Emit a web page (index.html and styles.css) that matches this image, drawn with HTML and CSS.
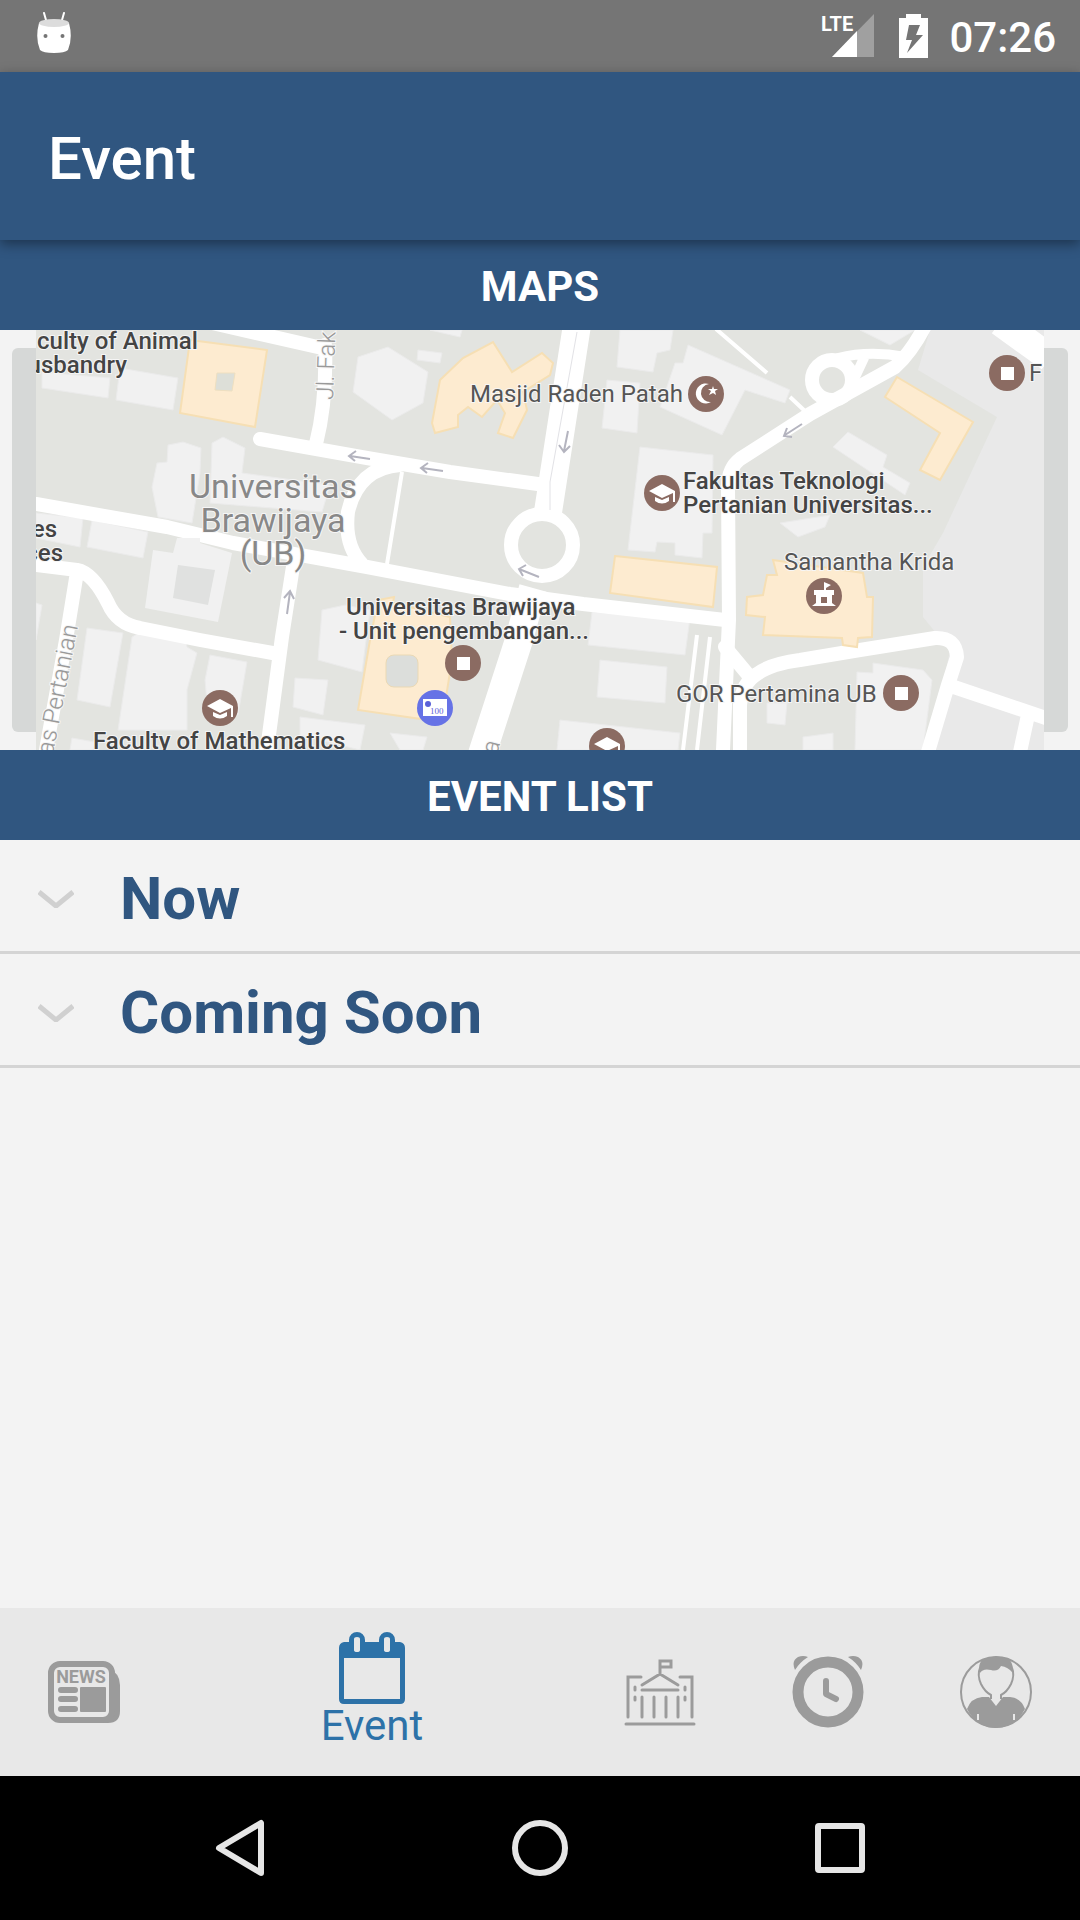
FILE: index.html
```html
<!DOCTYPE html>
<html lang="en">
<head>
<meta charset="utf-8">
<meta name="viewport" content="width=device-width, initial-scale=1">
<title>Event</title>
<link rel="stylesheet" href="styles.css">
</head>
<body>
<div class="screen">
  <div class="status-bar">
    <svg class="debug-icon" viewBox="0 0 34 42" width="34" height="42" aria-hidden="true">
      <path d="M7 1 9 8M27 1 25 8" stroke="#fff" stroke-width="2" stroke-linecap="round"/>
      <path d="M2 11Q17 15 32 11Q36 26 31 38Q28 41 17 41T3 38Q-2 26 2 11Z" fill="#fff"/>
      <ellipse cx="17" cy="11" rx="15" ry="4" fill="#dcdcdc"/>
      <circle cx="8.500" cy="24" r="2" fill="#757575"/><circle cx="25.500" cy="24" r="2" fill="#757575"/>
    </svg>
    <div class="status-icons">
      <svg viewBox="0 0 54 44" width="54" height="44" aria-hidden="true">
        <path d="M53 0V43H11Z" fill="#a0a0a0"/>
        <path d="M36 17V43H11Z" fill="#fff"/>
        <text class="lte" x="0" y="17">LTE</text>
      </svg>
      <svg class="battery" viewBox="0 0 29 44" width="29" height="44" aria-hidden="true">
        <path fill="#fff" fill-rule="evenodd" d="M7 0H22V4H29V44H0V4H7ZM10 11 7 26H13L8 39 24 21H17L21 11Z"/>
      </svg>
      <time class="clock">07:26</time>
    </div>
  </div>

  <header class="app-bar"><h1>Event</h1></header>

  <main class="content">
    <h2 class="section-title">Maps</h2>
    <button class="map-button" type="button" aria-label="Open campus map">
      <svg class="map" viewBox="36 330 1008 420" aria-hidden="true">
        <rect x="36" y="330" width="1008" height="420" fill="#e3e4e0"/>
        <path fill="#e9e9e9" d="M930 330 918 370 997 417 943 533 923 567V617L950 650 930 750H1044V330Z"/>
        <g class="building">
          <path d="M42 372 110 378 108 398 42 388ZM120 368 178 378 173 410 116 400Z"/>
          <path d="M168 445 183 442 201 448 200 473 192 523 158 517 152 487 157 463 167 462Z"/>
          <path d="M212 443 223 437 245 448 242 473 330 485 322 512 210 503Z"/>
          <path d="M36 513 83 518 80 547 36 538ZM92 520 148 532 143 558 87 547Z"/>
          <path d="M87 628 123 633 110 707 77 700ZM132 637 147 628 185 635 187 647 197 653 187 690V730H118Z"/>
          <path d="M210 655 247 662 238 715H208L205 680ZM36 603 42 605 36 640ZM72 738 95 742 93 750H70Z"/>
          <path d="M295 678 328 680 323 715 293 707ZM300 717 365 725 360 750 300 735ZM322 610 345 605 370 610 362 672 318 660Z"/>
          <path d="M388 347 428 372 423 403 392 420 353 392 358 357ZM418 350 442 353 440 363 417 360ZM430 330H462L460 337Z"/>
          <path d="M620 330H673L670 350 657 353 653 372 617 367ZM688 345 790 390 785 403 745 390 722 435 660 407 675 363 683 363Z"/>
          <path d="M607 380 640 383 637 433 602 428ZM640 447 713 455 712 533H703L702 558 675 555V543L657 542 655 552 628 550Z"/>
          <path d="M592 612 690 618 685 655 588 645ZM600 660 667 667 665 703 597 697ZM560 720 680 733 678 750H557Z"/>
          <path d="M390 733 427 737 423 750H400ZM848 432 887 455 883 467 910 483 905 495 833 447ZM780 523 830 515 825 527 798 537Z"/>
          <path d="M857 672 873 673V663L923 670 932 680 923 750H855ZM767 703H787L785 725 767 723ZM803 737 833 733V750H803ZM860 330H915L890 345Z"/>
        </g>
        <g class="road">
          <path d="M208 322 322 348M325 345Q327 400 316 444M260 439 367 458 450 472 545 485"/>
          <path d="M400 465Q358 468 348 512Q344 545 362 564M36 504 167 527 233 543 367 567 510 594 583 604 725 620"/>
          <path d="M36 565 77 570Q93 573 108 603Q117 624 140 628L200 640 278 654M77 572 66 640 46 750"/>
          <path d="M294 560 282 637 267 750M927 322Q912 352 895 367L810 414 740 459Q728 468 728 487L729 620 723 750"/>
          <path d="M740 752V705Q742 683 757 674Q770 664 800 660L860 650 935 638Q956 637 957 657L948 685 928 752M725 647 750 677M948 685 1046 718M1028 715 1020 752"/>
          <circle cx="832" cy="380" r="20"/>
          <circle class="ring" cx="542" cy="545" r="31"/>
          <path class="wide" d="M577 325 563 415 548 512M533 588 518 643 482 754M1000 322 1050 358"/>
          <path class="medium" d="M838 358Q870 350 905 357M864 358 850 388"/>
          <path class="thin" d="M402 472 387 564M716 329 767 373M790 397 807 413M697 635 683 750M710 637 697 750"/>
        </g>
        <path fill="#f1f1f1" d="M177 538H200V543L232 553 218 622 145 608 153 550 173 553Z"/>
        <path fill="#e0e1e0" d="M178 565 215 570 208 605 173 598Z"/>
        <path d="M577 332 550 482 550 510" fill="none" stroke="#e2e2e6" stroke-width="1"/>
        <g class="landmark">
          <path d="M190 340 267 350 255 427 180 413Z"/>
          <path d="M493 342 512 372 542 353 553 363 550 375 523 392 527 410 513 438 498 433 505 413 497 400 482 417 468 407 458 415V427L435 433 432 423 440 380 463 358Z"/>
          <path d="M615 556 717 567 713 607 610 593ZM897 377 973 422 940 480 920 470 940 433 885 397Z"/>
          <path d="M370 640 378 600 394 597 393 603 450 617 452 660 442 722 358 710Z"/>
          <path d="M773 560 863 573 867 597H873L872 637 858 638 857 647 843 645 842 638 763 635 765 617 746 615 747 597 763 595 767 575H777Z"/>
        </g>
        <path fill="#dddfd8" stroke="#eedfc0" d="M217 373 235 373 232 391 215 390Z"/>
        <rect x="386" y="655" width="32" height="32" rx="8" fill="#dcdedb" stroke="#ead9b5"/>
        <g class="arrow">
          <path d="M370 459 350 456M356 451 349 456 355 461M443 471 422 468M428 463 421 468 427 473"/>
          <path d="M568 431 564 451M559 445 564 452 570 446M287 614 290 592M284 598 290 591 294 599"/>
          <path d="M802 424 785 435M787 428 784 436 792 437M539 577 519 569M526 565 519 569 523 576"/>
        </g>
        <g class="pin">
          <circle cx="220" cy="708" r="18"/><circle cx="706" cy="394" r="18"/><circle cx="662" cy="493" r="18"/>
          <circle cx="463" cy="663" r="18"/><circle cx="607" cy="746" r="18"/><circle cx="1007" cy="373" r="18"/>
          <circle cx="824" cy="596" r="18"/><circle cx="901" cy="693" r="18"/>
          <circle class="pin-blue" cx="435" cy="708" r="18"/>
        </g>
        <defs>
          <g id="cap">
            <path fill="#fff" d="M-13-2 0-9 13-2V9H11V0L0 5ZM-7 4 0 7 7 4V8Q0 13-7 8Z"/>
          </g>
        </defs>
        <use href="#cap" x="220" y="708"/><use href="#cap" x="662" y="493"/><use href="#cap" x="607" y="746"/>
        <g fill="#fff">
          <path d="M457 657H470V670H457ZM1001 367H1014V380H1001ZM895 687H908V700H895Z"/>
          <path d="M709 384A10 10 0 1 0 711 402A8 8 0 1 1 709 384ZM713 386 714 389H718L715 391 716 395 713 393 709 395 711 391 708 389H712Z"/>
          <path fill-rule="evenodd" d="M824 582 831 585 826 588V590H834V595H832V603L836 606H812L816 603V595H814V590H824ZM821 597V603H827V597Z"/>
          <rect x="423" y="699" width="24" height="17"/>
        </g>
        <circle cx="428" cy="704" r="3" fill="#5b61d8"/>
        <text class="note-value" x="430" y="714">100</text>
        <g class="label strong">
          <text x="37" y="349">culty of Animal</text>
          <text x="127" y="373" text-anchor="end">usbandry</text>
          <text x="57" y="537" text-anchor="end">es</text>
          <text x="63" y="561" text-anchor="end">ces</text>
          <text x="93" y="749">Faculty of Mathematics</text>
          <text x="346" y="615">Universitas Brawijaya</text>
          <text x="339" y="639">- Unit pengembangan...</text>
          <text x="683" y="489">Fakultas Teknologi</text>
          <text x="683" y="513">Pertanian Universitas...</text>
        </g>
        <g class="label">
          <text x="470" y="402">Masjid Raden Patah</text>
          <text x="784" y="570">Samantha Krida</text>
          <text x="676" y="702">GOR Pertamina UB</text>
          <text x="1029" y="381">F</text>
        </g>
        <g class="label area">
          <text x="273" y="498">Universitas</text>
          <text x="273" y="532">Brawijaya</text>
          <text x="273" y="565">(UB)</text>
        </g>
        <g class="label street">
          <text transform="translate(333 400) rotate(-88)">Jl. Fak</text>
          <text transform="translate(78 626) rotate(-79)" text-anchor="end">as Pertanian</text>
          <text transform="translate(497 755) rotate(-75)">a</text>
        </g>
      </svg>
    </button>

    <h2 class="section-title">Event List</h2>
    <ul class="event-groups">
      <li><button class="group" type="button" aria-expanded="false">
        <svg class="chevron" viewBox="0 0 36 18" width="36" height="18" aria-hidden="true"><path d="M1 2 18 16 35 2"/></svg>
        <span>Now</span></button></li>
      <li><button class="group" type="button" aria-expanded="false">
        <svg class="chevron" viewBox="0 0 36 18" width="36" height="18" aria-hidden="true"><path d="M1 2 18 16 35 2"/></svg>
        <span>Coming Soon</span></button></li>
    </ul>
  </main>

  <nav class="tabs" aria-label="Sections">
    <a class="tab" href="#news" aria-label="News">
      <svg viewBox="0 0 72 72" width="72" height="72">
        <path fill="currentColor" d="M60 12Q72 17 72 29V55Q72 67 60 67H50Z"/>
        <rect x="3" y="8" width="61" height="56" rx="9" fill="#e8e8e8" stroke="currentColor" stroke-width="6"/>
        <path d="M13 34H27M13 43H27M13 53H27" stroke="currentColor" stroke-width="6" stroke-linecap="round"/>
        <rect x="32" y="31" width="26" height="25" rx="1" fill="currentColor"/>
        <text class="news-word" x="33" y="27">NEWS</text>
      </svg>
    </a>
    <a class="tab active" href="#event" aria-current="page">
      <svg viewBox="0 0 72 72" width="72" height="72" aria-hidden="true">
        <path fill="currentColor" fill-rule="evenodd" d="M8 10H13V8A8 8 0 0 1 29 8V10H43V8A8 8 0 0 1 59 8V10H64Q69 11 69 16V67Q69 72 64 72H8Q3 72 3 67V16Q3 11 8 10ZM8 26V67H64V26ZM18 7V18Q18 20 21 20T24 18V7Q24 5 21 5T18 7ZM48 7V18Q48 20 51 20T54 18V7Q54 5 51 5T48 7Z"/>
      </svg>
      <span>Event</span>
    </a>
    <a class="tab" href="#campus" aria-label="Campus">
      <svg viewBox="0 0 72 72" width="72" height="72" fill="none" stroke="currentColor" stroke-width="3" stroke-linecap="round">
        <path d="M2 68H70M4 61V21H17M56 21H68V61M18 61V41M30 61V41M42 61V41M54 61V41M18 34H54M18 29 36 18 54 29M36 18V5H47V11H36M11 31V34M11 41V44M61 31V34M61 41V44"/>
      </svg>
    </a>
    <a class="tab" href="#schedule" aria-label="Schedule">
      <svg viewBox="0 0 72 72" width="72" height="72" fill="none" stroke="currentColor">
        <circle cx="36" cy="36" r="30" stroke-width="11"/>
        <path d="M34 25V38L44 43" stroke-width="6" stroke-linecap="round" stroke-linejoin="round"/>
        <path fill="currentColor" stroke="none" d="M3 14Q-1 5 6 1Q11-1 16 1Q8 6 3 14ZM69 14Q73 5 66 1Q61-1 56 1Q64 6 69 14Z"/>
      </svg>
    </a>
    <a class="tab" href="#profile" aria-label="Profile">
      <svg viewBox="0 0 72 72" width="72" height="72">
        <circle cx="36" cy="36" r="35" fill="none" stroke="currentColor" stroke-width="2"/>
        <path fill="none" stroke="currentColor" stroke-width="2" d="M20 12Q17 19 21 28Q25 36 31 39V43M52 12Q55 19 51 28Q47 36 41 39V43"/>
        <path fill="currentColor" d="M23 3Q36-2 49 3Q54 9 53 17Q48 11 41 10Q38 16 31 14Q23 12 20 17Q17 9 23 3ZM7 53Q11 42 22 41H29L36 50 43 41H50Q61 42 65 53Q56 71 36 72Q16 71 7 53Z"/>
        <path d="M18 58V64M54 58V64" stroke="#e8e8e8" stroke-width="2"/>
      </svg>
    </a>
  </nav>

  <div class="system-nav">
    <button type="button" aria-label="Back"><svg viewBox="0 0 60 60" width="60" height="60"><path d="M51 5V55L9 30Z"/></svg></button>
    <button type="button" aria-label="Home"><svg viewBox="0 0 60 60" width="60" height="60"><circle cx="30" cy="30" r="25"/></svg></button>
    <button type="button" aria-label="Recent apps"><svg viewBox="0 0 60 60" width="60" height="60"><rect x="8" y="8" width="44" height="44" rx="1"/></svg></button>
  </div>
</div>
</body>
</html>
```
FILE: styles.css
```css
* { box-sizing: border-box; }

body {
  margin: 0;
  background: #f3f3f3;
  color: #305680;
  font-family: Roboto, "Liberation Sans", sans-serif;
}

button {
  border: 0;
  padding: 0;
  background: none;
  color: inherit;
  font: inherit;
  text-align: left;
}

svg { display: block; }

.screen {
  display: flex;
  flex-direction: column;
  min-height: 100vh;
}

/* Status bar */
.status-bar {
  display: flex;
  justify-content: space-between;
  height: 72px;
  padding: 12px 24px 0 37px;
  background: #757575;
  color: #fff;
}

.status-icons {
  display: flex;
  align-items: flex-start;
  padding-top: 2px;
}

.lte {
  fill: #fff;
  font-size: 20px;
  font-weight: 700;
}

.battery { margin: 0 21px 0 24px; }

.clock {
  font-size: 42px;
  font-weight: 500;
  line-height: 48px;
}

/* Title */
.app-bar {
  position: relative;
  display: flex;
  align-items: center;
  height: 168px;
  padding: 6px 48px 0;
  background: #305680;
  color: #fff;
  box-shadow: 0 4px 12px rgba(0, 0, 0, 0.4);
}

.app-bar h1 {
  margin: 0;
  font-size: 60px;
  font-weight: 500;
  line-height: 72px;
}

.content { flex: 1; }

.section-title {
  margin: 0;
  padding: 22px 0 18px;
  background: #305680;
  color: #fff;
  font-size: 42px;
  font-weight: 700;
  line-height: 50px;
  text-align: center;
  text-transform: uppercase;
}

/* Map: the picture is taller than the rounded plate behind it */
.map-button {
  display: block;
  width: calc(100% - 24px);
  margin: 18px 12px;
  padding: 0 24px;
  border-radius: 6px;
  background: #d6d8d7;
}

.map {
  width: 100%;
  margin: -18px 0;
}

.building { fill: #f1f1f1; stroke: #ebebeb; }
.landmark { fill: #fdebd0; stroke: #f6dfb4; stroke-width: 2; }
.road { fill: none; stroke: #fff; stroke-width: 14; stroke-linecap: round; stroke-linejoin: round; }
.road .wide { stroke-width: 28; stroke-linecap: butt; }
.road .medium { stroke-width: 10; }
.road .thin { stroke-width: 4; stroke-linecap: butt; }
.arrow { fill: none; stroke: #b4b4bf; stroke-width: 2; }
.pin { fill: #8b6b62; }
.pin-blue { fill: #6672e6; }
.note-value { fill: #5b61d8; font: 9px "Liberation Serif", serif; }

.label {
  fill: #555;
  stroke: #f6f6f6;
  stroke-width: 2px;
  paint-order: stroke;
  font-size: 24px;
}

.label.strong { fill: #444; font-weight: 500; }
.label.area { fill: #888; font-size: 34px; text-anchor: middle; }
.label.street { fill: #999; font-weight: 300; }

/* Event groups */
.event-groups {
  margin: 0;
  padding: 0;
  list-style: none;
}

.group {
  display: flex;
  align-items: center;
  gap: 46px;
  width: 100%;
  padding: 23px 38px 16px;
  border-bottom: 3px solid #d4d4d4;
  font-size: 60px;
  font-weight: 700;
  line-height: 72px;
}

.chevron {
  fill: none;
  stroke: #d0d0d0;
  stroke-width: 5;
}

/* Bottom tabs */
.tabs {
  display: flex;
  height: 168px;
  background: #e8e8e8;
}

.tab {
  display: flex;
  flex: 0 0 168px;
  flex-direction: column;
  align-items: center;
  justify-content: center;
  color: #9b9b9b;
  text-decoration: none;
}

.tab.active {
  flex: 1;
  justify-content: flex-start;
  padding-top: 24px;
  color: #2d72a8;
  font-size: 42px;
  line-height: 44px;
}

.news-word {
  fill: currentColor;
  font-size: 18px;
  font-weight: 700;
  text-anchor: middle;
}

/* System navigation */
.system-nav {
  display: flex;
  height: 144px;
  padding: 0 90px;
  background: #000;
}

.system-nav button {
  display: flex;
  flex: 1;
  align-items: center;
  justify-content: center;
}

.system-nav svg {
  fill: none;
  stroke: #e6e6e6;
  stroke-width: 6;
  stroke-linejoin: round;
}
```
